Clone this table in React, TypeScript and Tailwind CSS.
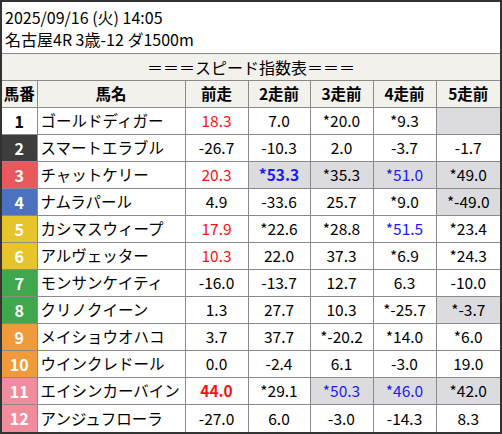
import React from "react";

type Cell = { v: string; c?: "red" | "blue"; b?: boolean; g?: boolean };

const waku: Record<number, string> = {
    1: "bg-white text-black",
    2: "bg-[#3d3d3d] text-white",
    3: "bg-[#e8585c] text-white",
    4: "bg-[#4a72c0] text-white",
    5: "bg-[#e8c42c] text-white",
    6: "bg-[#e8c42c] text-white",
    7: "bg-[#3fa84c] text-white",
    8: "bg-[#3fa84c] text-white",
    9: "bg-[#f09a3c] text-white",
    10: "bg-[#f09a3c] text-white",
    11: "bg-[#f08c9c] text-white",
    12: "bg-[#f08c9c] text-white",
};

const rows: { no: number; name: string; cells: Cell[] }[] = [
    {no: 1, name: "ゴールドディガー", cells: [{v: "18.3", c: "red"}, {v: "7.0"}, {v: "*20.0"}, {v: "*9.3"}, {v: "", g: true}]},
    {no: 2, name: "スマートエラブル", cells: [{v: "-26.7"}, {v: "-10.3"}, {v: "2.0"}, {v: "-3.7"}, {v: "-1.7"}]},
    {no: 3, name: "チャットケリー", cells: [{v: "20.3", c: "red"}, {v: "*53.3", c: "blue", b: true, g: true}, {v: "*35.3", g: true}, {v: "*51.0", c: "blue", g: true}, {v: "*49.0", g: true}]},
    {no: 4, name: "ナムラパール", cells: [{v: "4.9"}, {v: "-33.6"}, {v: "25.7"}, {v: "*9.0"}, {v: "*-49.0", g: true}]},
    {no: 5, name: "カシマスウィープ", cells: [{v: "17.9", c: "red"}, {v: "*22.6"}, {v: "*28.8"}, {v: "*51.5", c: "blue"}, {v: "*23.4"}]},
    {no: 6, name: "アルヴェッター", cells: [{v: "10.3", c: "red"}, {v: "22.0"}, {v: "37.3"}, {v: "*6.9"}, {v: "*24.3"}]},
    {no: 7, name: "モンサンケイティ", cells: [{v: "-16.0"}, {v: "-13.7"}, {v: "12.7"}, {v: "6.3"}, {v: "-10.0"}]},
    {no: 8, name: "クリノクイーン", cells: [{v: "1.3"}, {v: "27.7"}, {v: "10.3"}, {v: "*-25.7"}, {v: "*-3.7", g: true}]},
    {no: 9, name: "メイショウオハコ", cells: [{v: "3.7"}, {v: "37.7"}, {v: "*-20.2"}, {v: "*14.0"}, {v: "*6.0"}]},
    {no: 10, name: "ウインクレドール", cells: [{v: "0.0"}, {v: "-2.4"}, {v: "6.1"}, {v: "-3.0"}, {v: "19.0"}]},
    {no: 11, name: "エイシンカーバイン", cells: [{v: "44.0", c: "red", b: true}, {v: "*29.1"}, {v: "*50.3", c: "blue", g: true}, {v: "*46.0", c: "blue", g: true}, {v: "*42.0", g: true}]},
    {no: 12, name: "アンジュフローラ", cells: [{v: "-27.0"}, {v: "6.0"}, {v: "-3.0"}, {v: "-14.3"}, {v: "8.3"}]},
];

const heads = ["前走", "2走前", "3走前", "4走前", "5走前"];

export default function App() {
    return (
        <div
            className="w-[502px] h-[434px] border-2 border-[#333] bg-white text-black overflow-hidden"
            style={{fontFamily: '"Noto Sans CJK JP", "Noto Sans", sans-serif'}}>
            <div className="h-[51px] pl-[3px] pt-[4px] text-[16px] leading-[22px]">
                <div>2025/09/16 (火) 14:05</div>
                <div>名古屋4R 3歳-12 ダ1500m</div>
            </div>
            <div className="h-[27px] border-t border-[#8a8a8a] bg-[#f2f1ec] text-center text-[16px] leading-[26px]">
                ＝＝＝スピード指数表＝＝＝
            </div>
            <table className="table-fixed border-collapse w-[498px] text-[15.5px]">
                <colgroup>
                    <col className="w-[35px]"/>
                    <col className="w-[148px]"/>
                    <col className="w-[63px]"/>
                    <col className="w-[62px]"/>
                    <col className="w-[63px]"/>
                    <col className="w-[63px]"/>
                    <col className="w-[64px]"/>
                </colgroup>
                <thead>
                <tr className="h-[27px] bg-[#f2f1ec] font-bold">
                    <th className="border border-l-0 border-[#8a8a8a] p-0">馬番</th>
                    <th className="border border-[#8a8a8a] p-0">馬名</th>
                    {heads.map((h, i) => (
                        <th key={h} className={"border border-[#8a8a8a] p-0" + (i === 4 ? " border-r-0" : "")}>{h}</th>
                    ))}
                </tr>
                </thead>
                <tbody>
                {rows.map((r) => (
                    <tr key={r.no} className="h-[27px]">
                        <td className={"border border-l-0 border-[#8a8a8a] p-0 text-center font-bold text-[16px] " + waku[r.no] + (r.no === 12 ? " border-b-0" : "")}>
                            {r.no}
                        </td>
                        <td className={"border border-[#8a8a8a] pl-[3px] whitespace-nowrap" + (r.no === 12 ? " border-b-0" : "")}>{r.name}</td>
                        {r.cells.map((c, i) => (
                            <td
                                key={i}
                                className={
                                    "border border-[#8a8a8a] p-0 text-center whitespace-nowrap" +
                                    (c.g ? " bg-[#dcdce0]" : "") +
                                    (c.c === "red" ? " text-[#ff1010]" : "") +
                                    (c.c === "blue" ? " text-[#1a1aff]" : "") +
                                    (c.b ? " font-bold" : "") +
                                    (i === 4 ? " border-r-0" : "") +
                                    (r.no === 12 ? " border-b-0" : "")
                                }>
                                {c.v}
                            </td>
                        ))}
                    </tr>
                ))}
                </tbody>
            </table>
        </div>
    );
}
